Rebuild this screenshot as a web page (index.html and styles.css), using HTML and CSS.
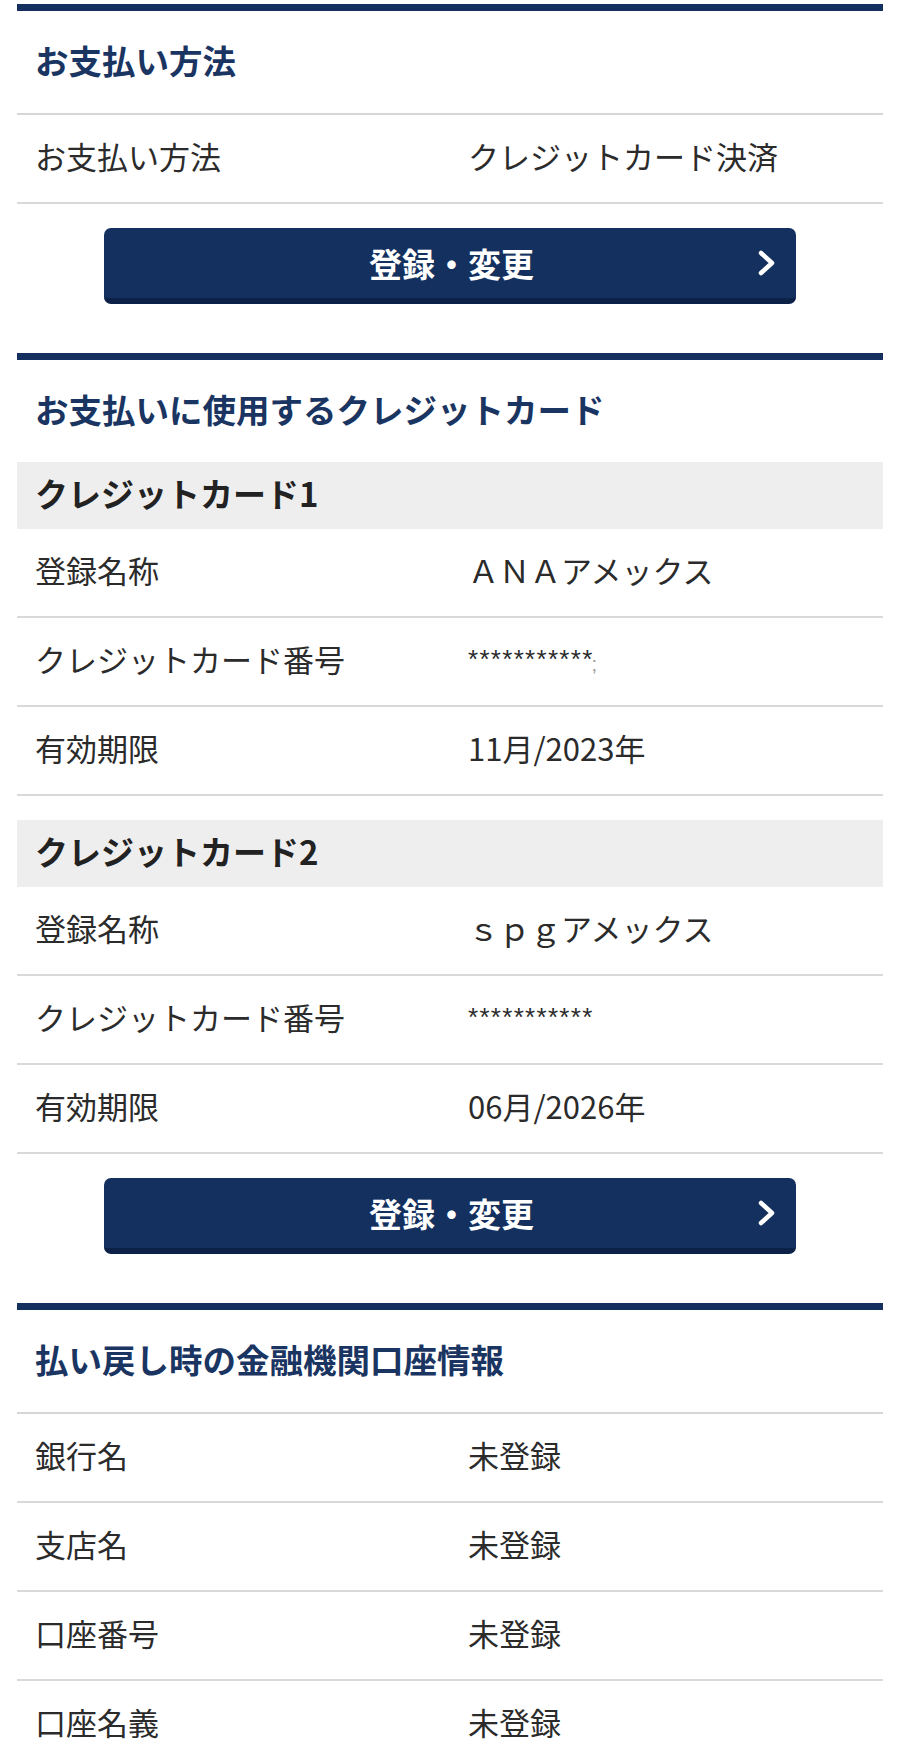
FILE: index.html
```html
<!DOCTYPE html>
<html lang="ja">
<head>
<meta charset="utf-8">
<title>お支払い方法</title>
<link rel="stylesheet" href="styles.css">
</head>
<body>
<main class="page">

  <section class="panel">
    <h2 class="panel-title panel-title--ruled">お支払い方法</h2>
    <dl class="info">
      <div class="row"><dt>お支払い方法</dt><dd>クレジットカード決済</dd></div>
    </dl>
    <div class="action">
      <a class="btn" href="#">
        <span class="btn-label">登録・変更</span>
        <svg class="btn-icon" width="20" height="28" viewBox="0 0 20 28" aria-hidden="true"><polyline points="4,4 15,14 4,24" fill="none" stroke="#fff" stroke-width="4.5" stroke-linecap="round" stroke-linejoin="round"/></svg>
      </a>
    </div>
  </section>

  <section class="panel">
    <h2 class="panel-title">お支払いに使用するクレジットカード</h2>
    <div class="card">
      <h3 class="card-title">クレジットカード1</h3>
      <dl class="info">
        <div class="row"><dt>登録名称</dt><dd>ＡＮＡアメックス</dd></div>
        <div class="row"><dt>クレジットカード番号</dt><dd><span class="mask">***********</span><span class="mask-tail">;</span></dd></div>
        <div class="row"><dt>有効期限</dt><dd>11月/2023年</dd></div>
      </dl>
    </div>
    <div class="card">
      <h3 class="card-title">クレジットカード2</h3>
      <dl class="info">
        <div class="row"><dt>登録名称</dt><dd>ｓｐｇアメックス</dd></div>
        <div class="row"><dt>クレジットカード番号</dt><dd><span class="mask">***********</span></dd></div>
        <div class="row"><dt>有効期限</dt><dd>06月/2026年</dd></div>
      </dl>
    </div>
    <div class="action">
      <a class="btn" href="#">
        <span class="btn-label">登録・変更</span>
        <svg class="btn-icon" width="20" height="28" viewBox="0 0 20 28" aria-hidden="true"><polyline points="4,4 15,14 4,24" fill="none" stroke="#fff" stroke-width="4.5" stroke-linecap="round" stroke-linejoin="round"/></svg>
      </a>
    </div>
  </section>

  <section class="panel">
    <h2 class="panel-title panel-title--ruled">払い戻し時の金融機関口座情報</h2>
    <dl class="info">
      <div class="row"><dt>銀行名</dt><dd>未登録</dd></div>
      <div class="row"><dt>支店名</dt><dd>未登録</dd></div>
      <div class="row"><dt>口座番号</dt><dd>未登録</dd></div>
      <div class="row"><dt>口座名義</dt><dd>未登録</dd></div>
    </dl>
  </section>

</main>
</body>
</html>
```

FILE: styles.css
```css
* {
  box-sizing: border-box;
}

body {
  margin: 0;
  background: #ffffff;
  color: #2b2b2b;
  font-family: "Noto Sans CJK JP", "Noto Sans", sans-serif;
}

.page {
  padding: 4px 17px 0;
}

.panel {
  border-top: 7px solid #15305f;
}

.panel + .panel {
  margin-top: 49px;
}

.panel-title {
  margin: 0;
  height: 102px;
  display: flex;
  align-items: center;
  padding: 0 18px 5px;
  font-size: 33.5px;
  font-weight: 700;
  color: #1a3562;
  letter-spacing: 0;
}

.panel-title--ruled {
  height: 104px;
  border-bottom: 2px solid #d6d6d6;
}

.info {
  margin: 0;
}

.row {
  display: grid;
  grid-template-columns: 1fr 1fr;
  align-items: center;
  height: 89px;
  padding-bottom: 6px;
  border-bottom: 2px solid #d9d9d9;
}

.row dt,
.row dd {
  margin: 0;
  padding: 0 18px;
  font-size: 31px;
  line-height: 1.2;
  white-space: nowrap;
}

.card + .card {
  margin-top: 24px;
}

.card-title {
  margin: 0;
  height: 67px;
  display: flex;
  align-items: center;
  padding: 0 18px 5px;
  background: #eeeeee;
  font-size: 33px;
  font-weight: 700;
  color: #222222;
}

.mask {
  font-family: "Liberation Sans", sans-serif;
  font-size: 26px;
  letter-spacing: 1.3px;
  position: relative;
  top: -3px;
}

.mask-tail {
  font-family: "Liberation Sans", sans-serif;
  font-size: 20px;
  color: #9a9a9a;
  margin-left: -2px;
}

.action {
  padding-top: 24px;
}

.btn {
  display: grid;
  grid-template-columns: 1fr auto 1fr;
  align-items: center;
  width: 80%;
  height: 76px;
  margin: 0 auto;
  padding: 0 19px 0 22px;
  background: #13305f;
  border-bottom: 6px solid #0b2148;
  border-radius: 7px;
  color: #ffffff;
  text-decoration: none;
}

.btn-label {
  grid-column: 2;
  font-size: 33px;
  font-weight: 700;
  letter-spacing: 0;
}

.btn-icon {
  grid-column: 3;
  justify-self: end;
  display: block;
}
```
